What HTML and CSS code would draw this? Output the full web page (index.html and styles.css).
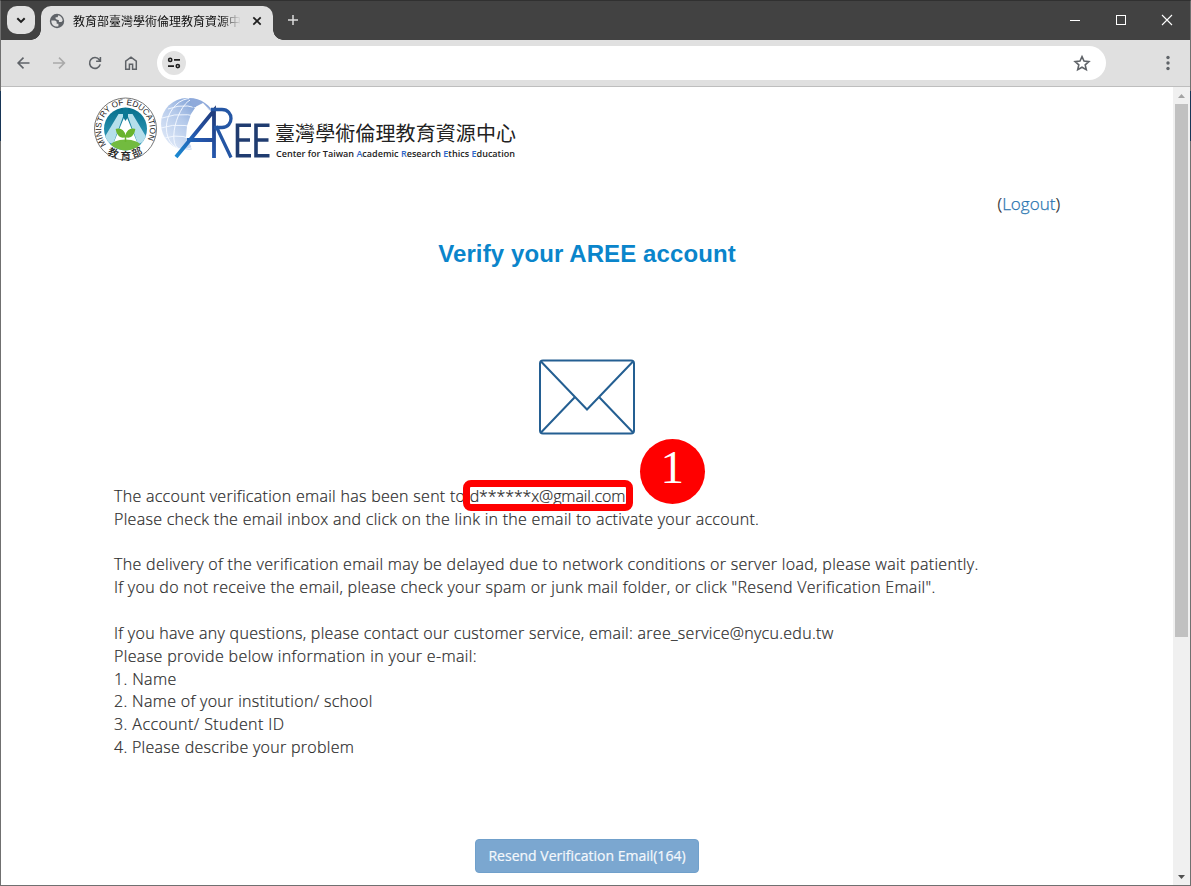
FILE: index.html
```html
<!DOCTYPE html>
<html lang="en">
<head>
    <meta charset="UTF-8">
    <meta name="viewport" content="width=device-width, initial-scale=1.0">
    <title>Verify your AREE account</title>
    <link rel="stylesheet" href="styles.css">
</head>
<body>
<div class="window">
    <!-- Tab strip -->
    <div class="titlebar">
        <button class="tab-search" aria-label="Search tabs">
            <svg width="28" height="28" viewBox="0 0 28 28"><path d="M10.3 12.2l3.7 3.7 3.7-3.7" fill="none" stroke="#1f1f1f" stroke-width="2"/></svg>
        </button>
        <div class="tab">
            <svg class="favicon" width="16" height="16" viewBox="0 0 16 16">
                <circle cx="8" cy="8" r="7.2" fill="#5f6368"/>
                <path d="M2.3 7.4h3.1c1.6 0 2.3.7 2.3 2v1.4h1.7v2.4c-1 .5-2.3.5-3.5 0C3.8 12.4 2.2 10.3 2.3 7.4z" fill="#e0e0e0"/>
                <path d="M9.3 2.3c2.5.6 4.3 2.8 4.4 5.4l-1.3 1.2H9.9V7.2L7.7 6.5 6.6 5.8V4.3h2z" fill="#e0e0e0"/>
            </svg>
            <span class="tab-title">教育部臺灣學術倫理教育資源中心</span>
            <svg class="tab-close" width="16" height="16" viewBox="0 0 16 16"><path d="M4.3 4.3l7.4 7.4M11.7 4.3l-7.4 7.4" stroke="#1f1f1f" stroke-width="1.7"/></svg>
        </div>
        <svg class="new-tab" width="20" height="20" viewBox="0 0 20 20"><path d="M10 5v10M5 10h10" stroke="#dcdcdc" stroke-width="1.5"/></svg>
        <div class="controls">
            <svg width="46" height="38" viewBox="0 0 46 38"><path d="M18 19.5h10" stroke="#fff"/></svg>
            <svg width="46" height="38" viewBox="0 0 46 38"><rect x="18.5" y="14.5" width="9" height="9" fill="none" stroke="#fff"/></svg>
            <svg width="46" height="38" viewBox="0 0 46 38"><path d="M18 14l10 10M28 14L18 24" stroke="#fff" stroke-width="1.1"/></svg>
        </div>
    </div>

    <!-- Address bar -->
    <div class="toolbar">
        <svg class="nav-icon" width="20" height="20" viewBox="0 0 20 20"><path d="M16.5 10H5.3M10.5 4.6L5.1 10l5.4 5.4" fill="none" stroke="#5f6368" stroke-width="1.6"/></svg>
        <svg class="nav-icon" width="20" height="20" viewBox="0 0 20 20"><path d="M4 10h11.2M10 4.6l5.4 5.4-5.4 5.4" fill="none" stroke="#a9a9a9" stroke-width="1.6"/></svg>
        <svg class="nav-icon" width="20" height="20" viewBox="0 0 20 20"><path d="M15.2 11.4A5.4 5.4 0 1 1 14.3 6.7L15.4 8M15.4 4v4.3h-4.3" fill="none" stroke="#5f6368" stroke-width="1.6"/></svg>
        <svg class="nav-icon" width="20" height="20" viewBox="0 0 20 20"><path d="M4.7 16.2V8.2L10 4.1l5.3 4.1v8h-3.7v-4.9H8.4v4.9z" fill="none" stroke="#5f6368" stroke-width="1.5"/></svg>
        <div class="omnibox">
            <svg width="24" height="24" viewBox="0 0 24 24">
                <circle cx="12" cy="12" r="12" fill="#e2e2e2"/>
                <g fill="none" stroke="#1f1f1f" stroke-width="1.6"><circle cx="8.2" cy="8.9" r="1.6"/><path d="M12 8.9h6M6 15.1h6"/><circle cx="15.8" cy="15.1" r="1.6"/></g>
            </svg>
            <svg width="20" height="20" viewBox="0 0 20 20"><path d="M10 3.6l2 4.5 4.9.5-3.7 3.3 1.1 4.8-4.3-2.5-4.3 2.5 1.1-4.8-3.7-3.3 4.9-.5z" fill="none" stroke="#5f6368" stroke-width="1.6"/></svg>
        </div>
        <svg class="menu" width="6" height="20" viewBox="0 0 6 20" fill="#5f6368"><circle cx="3" cy="4.5" r="1.7"/><circle cx="3" cy="10" r="1.7"/><circle cx="3" cy="15.5" r="1.7"/></svg>
    </div>

    <div class="viewport">
        <main class="page">
            <!-- Site logo -->
            <svg class="logo" width="424" height="68" viewBox="0 0 424 68">
                <defs>
                    <linearGradient id="globe" x1="0" y1="1" x2="1" y2="0"><stop offset="0" stop-color="#e9f0fb"/><stop offset=".5" stop-color="#b4c9ea"/><stop offset="1" stop-color="#5c85c8"/></linearGradient>
                    <linearGradient id="stroke" x1="0" y1="1" x2="1" y2="0"><stop offset="0" stop-color="#1b8cd3"/><stop offset=".5" stop-color="#2456ac"/><stop offset="1" stop-color="#203a78"/></linearGradient>
                    <linearGradient id="teal" x1="0" y1="0" x2="0" y2="1"><stop offset="0" stop-color="#056f8c"/><stop offset="1" stop-color="#3fa6c6"/></linearGradient>
                    <path id="arcTop" d="M12.500 48.500A24.300 24.300 0 1 1 50.500 48.500"/>
                    <clipPath id="sealClip"><circle cx="31.5" cy="33" r="21.5"/></clipPath>
                </defs>
                <circle cx="31.5" cy="33" r="31" fill="#fff" stroke="#777" stroke-width="1"/>
                <circle cx="31.5" cy="33" r="21.5" fill="url(#teal)"/>
                <g clip-path="url(#sealClip)">
                    <path d="M31.5 18L20 46h23z" fill="#fff"/>
                    <path d="M24.5 18h5.5L19 48 9 44zM33 18h5.5L54 44l-10 4z" fill="#b5dfeb"/>
                    <path d="M29 12h5v9l-2.5 4-2.5-4z" fill="#0b7894"/>
                    <ellipse cx="31.5" cy="50" rx="15" ry="6.5" fill="#72bb3f"/>
                </g>
                <path d="M31.5 46v-6M31 40.5c-4 1.5-8-1.5-8.5-7 5-1 8 2 8.5 7zM32 40.5c4 1.5 8-1.5 8.5-7-5-1-8 2-8.5 7z" fill="#69b42e" stroke="#69b42e" stroke-width="1.5"/>
                <text class="seal-text"><textPath href="#arcTop">MINISTRY OF EDUCATION</textPath></text>
                <g class="seal-cjk"><text transform="translate(13 58.5) rotate(22)">教</text><text x="26.5" y="63.5">育</text><text transform="translate(39.5 62) rotate(-22)">部</text></g>

                <circle cx="93" cy="28" r="26" fill="url(#globe)"/>
                <g fill="none" stroke="#f4f8ff" stroke-width=".9"><ellipse cx="93" cy="28" rx="11" ry="26" transform="rotate(18 93 28)"/><ellipse cx="93" cy="28" rx="20" ry="26" transform="rotate(18 93 28)"/><path d="M74 13q20-8 39 4M68 22q25-9 53 5M67 32q23-8 50 6M71 42q18-6 36 6"/></g>
                <path d="M109 6l-6 3-6 9-4 12-1 11 5 9 1 5h27V30l-6-4-1-8z" fill="#fff"/>
                <path d="M95 2c12 0 22 7 26 18l-7-8-5-5-6 3-4 2z" fill="#8faadb"/>
                <path d="M82 61L120 14.5V62M93 44h28" fill="none" stroke="url(#stroke)" stroke-width="3.8"/>
                <path d="M117 13.500h11c12 0 12 18 0 18h-8M122 30l15 31.500" fill="none" stroke="#2456a4" stroke-width="3.3"/>
                <path d="M157 29.200h-13.500v30.600H157M143.500 44h12.500M175.500 29.200H162v30.600h13.500M162 44h12.500" fill="none" stroke="#203c70" stroke-width="3.6"/>
                <text class="logo-cjk" x="181" y="45" textLength="241">臺灣學術倫理教育資源中心</text>
                <text class="logo-en" x="182" y="61" textLength="239" lengthAdjust="spacingAndGlyphs">Center for Taiwan <tspan class="cap">A</tspan>cademic <tspan class="cap">R</tspan>esearch <tspan class="cap">E</tspan>thics <tspan class="cap">E</tspan>ducation</text>
            </svg>

            <div class="logout">(<a>Logout</a>)</div>
            <h1>Verify your AREE account</h1>

            <svg class="envelope" width="98" height="76" viewBox="0 0 98 76" fill="none" stroke="#245f92" stroke-width="2">
                <rect x="2" y="1.5" width="94" height="73" rx="3"/>
                <path d="M3 2.5l46 48 46-48M36.5 38.5L3 73.5M61.5 38.5l33.5 35"/>
            </svg>

            <div class="message">
                <p>The account verification email has been sent to <span class="email">d******x@gmail.com<span class="highlight"></span><span class="step">1</span></span></p>
                <p>Please check the email inbox and click on the link in the email to activate your account.</p>
                <br>
                <p class="wide">The delivery of the verification email may be delayed due to network conditions or server load, please wait patiently.</p>
                <p>If you do not receive the email, please check your spam or junk mail folder, or click "Resend Verification Email".</p>
                <br>
                <p>If you have any questions, please contact our customer service, email: aree_service@nycu.edu.tw</p>
                <p class="wider">Please provide below information in your e-mail:</p>
                <p class="wider">1. Name</p>
                <p class="wide">2. Name of your institution/ school</p>
                <p class="widest">3. Account/ Student ID</p>
                <p>4. Please describe your problem</p>
            </div>

            <button class="resend">Resend Verification Email(164)</button>
        </main>

        <div class="scrollbar">
            <svg width="17" height="17" viewBox="0 0 17 17"><path d="M5 11l3.5-4 3.5 4z" fill="#a3a3a3"/></svg>
            <div class="thumb"></div>
            <svg class="down" width="17" height="17" viewBox="0 0 17 17"><path d="M5 7l3.5 4L12 7z" fill="#505050"/></svg>
        </div>
    </div>
    <span class="edge edge-left"></span>
    <span class="edge edge-right"></span>
</div>
</body>
</html>
```
FILE: styles.css
```css
* {
    box-sizing: border-box;
}
body {
    margin: 0;
    font-family: "Open Sans", "Noto Sans CJK TC", sans-serif;
    overflow: hidden;
}
svg {
    display: block;
    flex-shrink: 0;
}
button {
    border: none;
    padding: 0;
}
.window {
    position: relative;
    width: 1191px;
    height: 886px;
    border: 1px solid #707070;
    border-top-color: #303030;
    display: flex;
    flex-direction: column;
    background-color: #fff;
}

/* Tab strip */
.titlebar {
    height: 39px;
    display: flex;
    background-color: #424242;
    padding: 5px 0 0 6px;
}
.tab-search {
    width: 28px;
    height: 28px;
    border-radius: 10px;
    background-color: #e0e0e0;
}
.tab {
    position: relative;
    width: 232px;
    height: 34px;
    margin-left: 6px;
    padding: 0 8px 5px;
    display: flex;
    align-items: center;
    border-radius: 10px 10px 0 0;
    background-color: #e0e0e0;
}
.tab::before, .tab::after {
    content: "";
    position: absolute;
    bottom: 0;
    width: 10px;
    height: 10px;
}
.tab::before {
    left: -10px;
    background: radial-gradient(circle at 0 0, transparent 9.5px, #e0e0e0 10px);
}
.tab::after {
    right: -10px;
    background: radial-gradient(circle at 100% 0, transparent 9.5px, #e0e0e0 10px);
}
.tab-title {
    width: 168px;
    margin-left: 8px;
    overflow: hidden;
    white-space: nowrap;
    font: 12px "Noto Sans CJK TC", sans-serif;
    color: #111;
    -webkit-mask-image: linear-gradient(to right, #000 148px, transparent 168px);
    mask-image: linear-gradient(to right, #000 148px, transparent 168px);
}
.tab-close {
    margin-left: 8px;
}
.new-tab {
    margin: 4px 0 0 10px;
}
.controls {
    display: flex;
    margin: -5px 0 0 auto;
}

/* Address bar */
.toolbar {
    height: 47px;
    display: flex;
    align-items: center;
    padding: 0 19px 0 12px;
    border-bottom: 1px solid #bebebe;
    background-color: #e0e0e0;
}
.nav-icon {
    margin-right: 16px;
}
.omnibox {
    width: 949px;
    height: 34px;
    border-radius: 17px;
    padding: 0 14px 0 5px;
    display: flex;
    align-items: center;
    justify-content: space-between;
    background-color: #fff;
}
.menu {
    margin-left: auto;
}

/* Page */
.viewport {
    flex: 1;
    display: flex;
    min-height: 0;
}
.page {
    flex: 1;
    display: flex;
    flex-direction: column;
    padding: 9px 0 0 93px;
    color: #2b2b2b;
}
.seal-text {
    font: 8.2px "Liberation Sans", sans-serif;
    fill: #222;
}
.seal-cjk {
    font: 500 10.5px "Noto Sans CJK TC", sans-serif;
    fill: #222;
}
.logo-cjk {
    font: 20px "Noto Sans CJK TC", sans-serif;
    fill: #222;
}
.logo-en {
    font: 600 9.5px "Open Sans", sans-serif;
    fill: #222;
}
.logo-en .cap {
    fill: #2f66c8;
}
.logout {
    align-self: flex-end;
    margin: 28px 113px 0 0;
    font-size: 17px;
    line-height: 24px;
    font-weight: 300;
    -webkit-text-stroke: 0.25px;
}
.logout a {
    color: #2a75b0;
}
h1 {
    margin: 24px 0 0;
    padding-right: 93px;
    text-align: center;
    font: bold 24px/28px "Liberation Sans", sans-serif;
    letter-spacing: 0.1px;
    color: #0a85cb;
}
.envelope {
    margin: 91px 0 0 444px;
}
.message {
    margin: 50px 0 0 20px;
    font-size: 16px;
    font-weight: 300;
    line-height: 22.83px;
    letter-spacing: 0.29px;
    -webkit-text-stroke: 0.2px;
}
.message p {
    margin: 0;
    white-space: nowrap;
}
.message .wide {
    letter-spacing: 0.315px;
}
.message .wider {
    letter-spacing: 0.36px;
}
.message .widest {
    letter-spacing: 0.42px;
}
.email {
    position: relative;
    letter-spacing: -0.12px;
}
.highlight {
    position: absolute;
    left: -7px;
    top: -5px;
    width: 170px;
    height: 31px;
    border: 7px solid #f00;
    border-radius: 8px;
}
.step {
    position: absolute;
    left: 170px;
    top: -46px;
    width: 65px;
    height: 65px;
    border-radius: 50%;
    background-color: #f00;
    color: #fff;
    font: 47px/57px "Liberation Serif", serif;
    text-align: center;
    -webkit-text-stroke: 0;
}
.resend {
    width: 224px;
    height: 34px;
    margin: 80px 0 0 381px;
    padding-bottom: 1px;
    border: 1px solid #70a0cb;
    border-radius: 4px;
    background-color: #7ba7d0;
    color: #f4f8fc;
    font: 14px "Open Sans", sans-serif;
    -webkit-text-stroke: 0.2px;
}

/* Scrollbar */
.scrollbar {
    width: 17px;
    display: flex;
    flex-direction: column;
    background-color: #f0f0f0;
}
.thumb {
    height: 533px;
    margin: 0 2px;
    background-color: #c1c1c1;
}
.down {
    margin-top: auto;
}
.edge {
    position: absolute;
    top: 90px;
    width: 1px;
    height: 50px;
    background-color: #173556;
}
.edge-left {
    left: -1px;
}
.edge-right {
    right: -1px;
}
```
